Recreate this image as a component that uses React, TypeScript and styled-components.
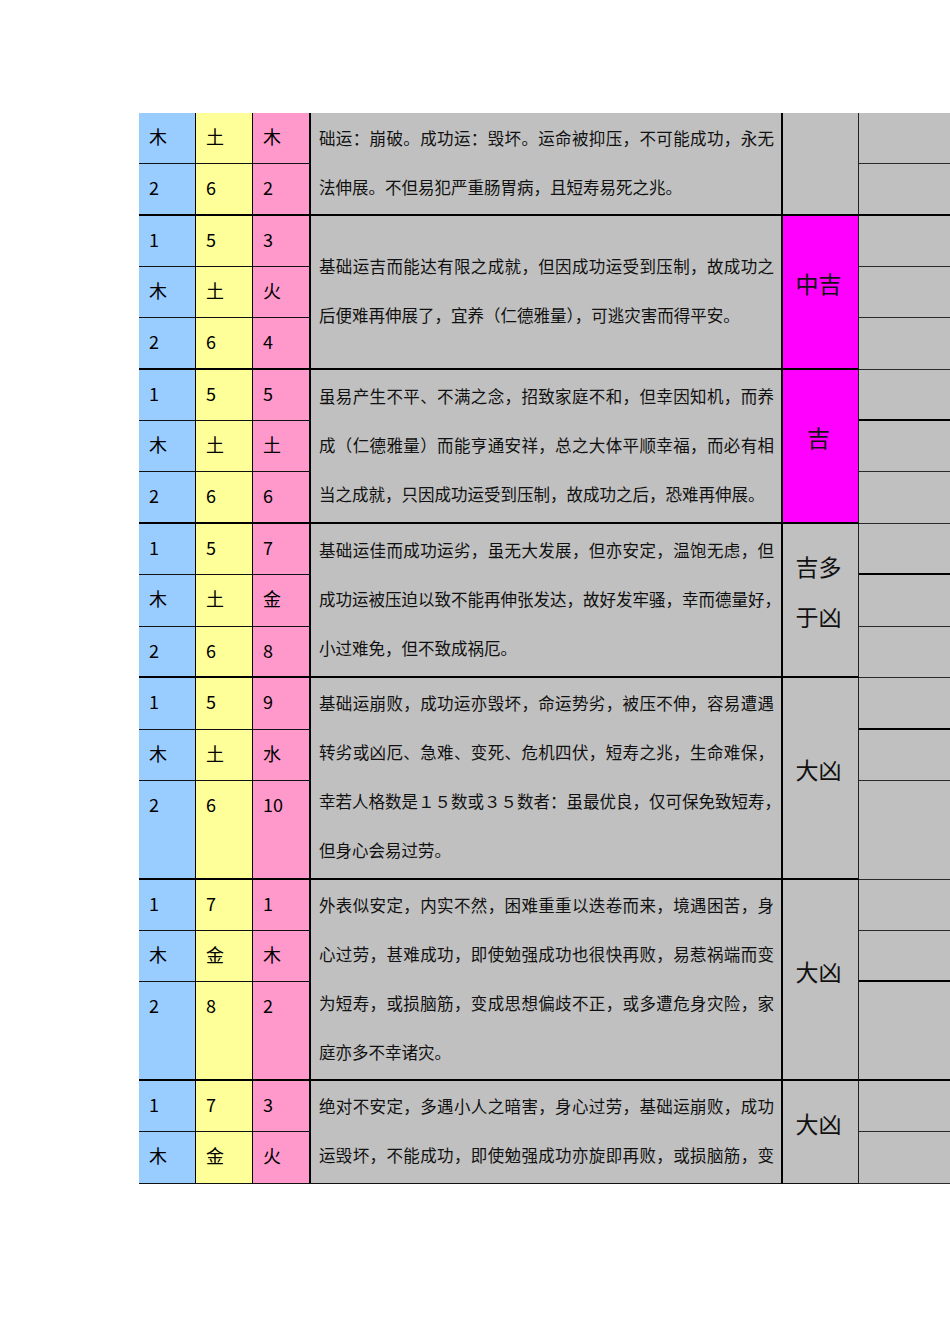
import React from "react";
import styled, { createGlobalStyle } from "styled-components";

const GlobalStyle = createGlobalStyle`
  html, body {
    margin: 0;
    padding: 0;
    background: #ffffff;
    overflow: hidden;
  }
  body {
    font-family: "Noto Sans CJK SC", "Noto Sans", sans-serif;
    color: #000;
  }
`;

const Page = styled.div`
  padding: 113px 0 0 139px;
  width: 1100px;
`;

const Table = styled.div`
  display: flex;
  flex-direction: column;
  width: 920px;
`;

const Group = styled.div`
  display: flex;
  align-items: stretch;
`;

const ElementBlock = styled.div`
  display: flex;
  flex-direction: column;
  width: 172px;
  flex: none;
`;

const ElemRow = styled.div<{ $h: number; $edge: boolean }>`
  display: flex;
  height: ${(p) => p.$h}px;
  box-sizing: border-box;
  border-bottom: ${(p) => (p.$edge ? "2px solid #000" : "1px solid #111")};
`;

const ElemCell = styled.div<{ $bg: string; $w: number; $bw: number }>`
  width: ${(p) => p.$w}px;
  flex: none;
  box-sizing: border-box;
  background: ${(p) => p.$bg};
  border-right: ${(p) => p.$bw}px solid #000;
  padding-left: 10px;
  font-size: 18px;
  line-height: 46px;
`;

const TextCell = styled.div<{ $edge: boolean }>`
  width: 472px;
  flex: none;
  box-sizing: border-box;
  background: #c0c0c0;
  border-right: 2px solid #000;
  border-bottom: ${(p) => (p.$edge ? "2px solid #000" : "1px solid #111")};
  padding: 0 7px 2px 8px;
  display: flex;
  flex-direction: column;
  justify-content: center;
  font-size: 16.5px;
  line-height: 49px;
  color: #111;
`;

const TextLine = styled.div<{ $full: boolean }>`
  white-space: nowrap;
  text-align: ${(p) => (p.$full ? "justify" : "left")};
  text-align-last: ${(p) => (p.$full ? "justify" : "left")};
`;

const ResultCell = styled.div<{ $bg: string; $edge: boolean }>`
  width: 76px;
  flex: none;
  box-sizing: border-box;
  background: ${(p) => p.$bg};
  border-right: 1px solid #222;
  border-bottom: ${(p) => (p.$edge ? "2px solid #000" : "1px solid #111")};
  display: flex;
  flex-direction: column;
  align-items: center;
  justify-content: center;
  padding: 0 4px 18px 0;
  font-size: 23px;
  line-height: 50px;
  color: #111;
`;

const SideCol = styled.div`
  display: flex;
  flex-direction: column;
  flex: 1;
`;

const SideRow = styled.div<{ $h: number; $thick: boolean }>`
  height: ${(p) => p.$h}px;
  box-sizing: border-box;
  background: #c0c0c0;
  border-bottom: ${(p) => (p.$thick ? "2px solid #000" : "1px solid #2a2a2a")};
`;

const BLUE = "#99ccff";
const YELLOW = "#ffff99";
const PINK = "#ff99cc";
const GREY = "#c0c0c0";
const MAGENTA = "#ff00ff";

type GroupData = {
  rows: { cells: [string, string, string]; h: number; side: boolean }[];
  text: string[];
  result: string[];
  resultBg: string;
};

const groups: GroupData[] = [
  {
    rows: [
      { cells: ["木", "土", "木"], h: 51, side: false },
      { cells: ["2", "6", "2"], h: 52, side: true },
    ],
    text: [
      "础运：崩破。成功运：毁坏。运命被抑压，不可能成功，永无",
      "法伸展。不但易犯严重肠胃病，且短寿易死之兆。",
    ],
    result: [],
    resultBg: GREY,
  },
  {
    rows: [
      { cells: ["1", "5", "3"], h: 51, side: false },
      { cells: ["木", "土", "火"], h: 51, side: false },
      { cells: ["2", "6", "4"], h: 52, side: false },
    ],
    text: [
      "基础运吉而能达有限之成就，但因成功运受到压制，故成功之",
      "后便难再伸展了，宜养（仁德雅量），可逃灾害而得平安。",
    ],
    result: ["中吉"],
    resultBg: MAGENTA,
  },
  {
    rows: [
      { cells: ["1", "5", "5"], h: 51, side: true },
      { cells: ["木", "土", "土"], h: 51, side: false },
      { cells: ["2", "6", "6"], h: 52, side: false },
    ],
    text: [
      "虽易产生不平、不满之念，招致家庭不和，但幸因知机，而养",
      "成（仁德雅量）而能亨通安祥，总之大体平顺幸福，而必有相",
      "当之成就，只因成功运受到压制，故成功之后，恐难再伸展。",
    ],
    result: ["吉"],
    resultBg: MAGENTA,
  },
  {
    rows: [
      { cells: ["1", "5", "7"], h: 51, side: true },
      { cells: ["木", "土", "金"], h: 52, side: false },
      { cells: ["2", "6", "8"], h: 51, side: false },
    ],
    text: [
      "基础运佳而成功运劣，虽无大发展，但亦安定，温饱无虑，但",
      "成功运被压迫以致不能再伸张发达，故好发牢骚，幸而德量好，",
      "小过难免，但不致成祸厄。",
    ],
    result: ["吉多", "于凶"],
    resultBg: GREY,
  },
  {
    rows: [
      { cells: ["1", "5", "9"], h: 52, side: true },
      { cells: ["木", "土", "水"], h: 51, side: false },
      { cells: ["2", "6", "10"], h: 99, side: false },
    ],
    text: [
      "基础运崩败，成功运亦毁坏，命运势劣，被压不伸，容易遭遇",
      "转劣或凶厄、急难、变死、危机四伏，短寿之兆，生命难保，",
      "幸若人格数是１５数或３５数者：虽最优良，仅可保免致短寿，",
      "但身心会易过劳。",
    ],
    result: ["大凶"],
    resultBg: GREY,
  },
  {
    rows: [
      { cells: ["1", "7", "1"], h: 51, side: false },
      { cells: ["木", "金", "木"], h: 51, side: true },
      { cells: ["2", "8", "2"], h: 99, side: true },
    ],
    text: [
      "外表似安定，内实不然，困难重重以迭卷而来，境遇困苦，身",
      "心过劳，甚难成功，即使勉强成功也很快再败，易惹祸端而变",
      "为短寿，或损脑筋，变成思想偏歧不正，或多遭危身灾险，家",
      "庭亦多不幸诸灾。",
    ],
    result: ["大凶"],
    resultBg: GREY,
  },
  {
    rows: [
      { cells: ["1", "7", "3"], h: 51, side: false },
      { cells: ["木", "金", "火"], h: 52, side: false },
    ],
    text: [
      "绝对不安定，多遇小人之暗害，身心过劳，基础运崩败，成功",
      "运毁坏，不能成功，即使勉强成功亦旋即再败，或损脑筋，变",
    ],
    result: ["大凶"],
    resultBg: GREY,
  },
];

const colBg = [BLUE, YELLOW, PINK];
const colW = [57, 57, 58];
const colB = [1, 1, 2];

export default function App() {
  return (
    <>
      <GlobalStyle />
      <Page>
        <Table>
          {groups.map((g, gi) => {
            const lastGroup = gi === groups.length - 1;
            return (
              <Group key={gi}>
                <ElementBlock>
                  {g.rows.map((r, ri) => (
                    <ElemRow
                      key={ri}
                      $h={r.h}
                      $edge={ri === g.rows.length - 1 && !lastGroup}
                    >
                      {r.cells.map((c, ci) => (
                        <ElemCell
                          key={ci}
                          $bg={colBg[ci]}
                          $w={colW[ci]}
                          $bw={colB[ci]}
                        >
                          {c}
                        </ElemCell>
                      ))}
                    </ElemRow>
                  ))}
                </ElementBlock>
                <TextCell $edge={!lastGroup}>
                  {g.text.map((t, ti) => (
                    <TextLine key={ti} $full={ti < g.text.length - 1 || lastGroup}>
                      {t}
                    </TextLine>
                  ))}
                </TextCell>
                <ResultCell $bg={g.resultBg} $edge={!lastGroup}>
                  {g.result.map((t, ti) => (
                    <span key={ti}>{t}</span>
                  ))}
                </ResultCell>
                <SideCol>
                  {g.rows.map((r, ri) => (
                    <SideRow key={ri} $h={r.h} $thick={r.side} />
                  ))}
                </SideCol>
              </Group>
            );
          })}
        </Table>
      </Page>
    </>
  );
}
